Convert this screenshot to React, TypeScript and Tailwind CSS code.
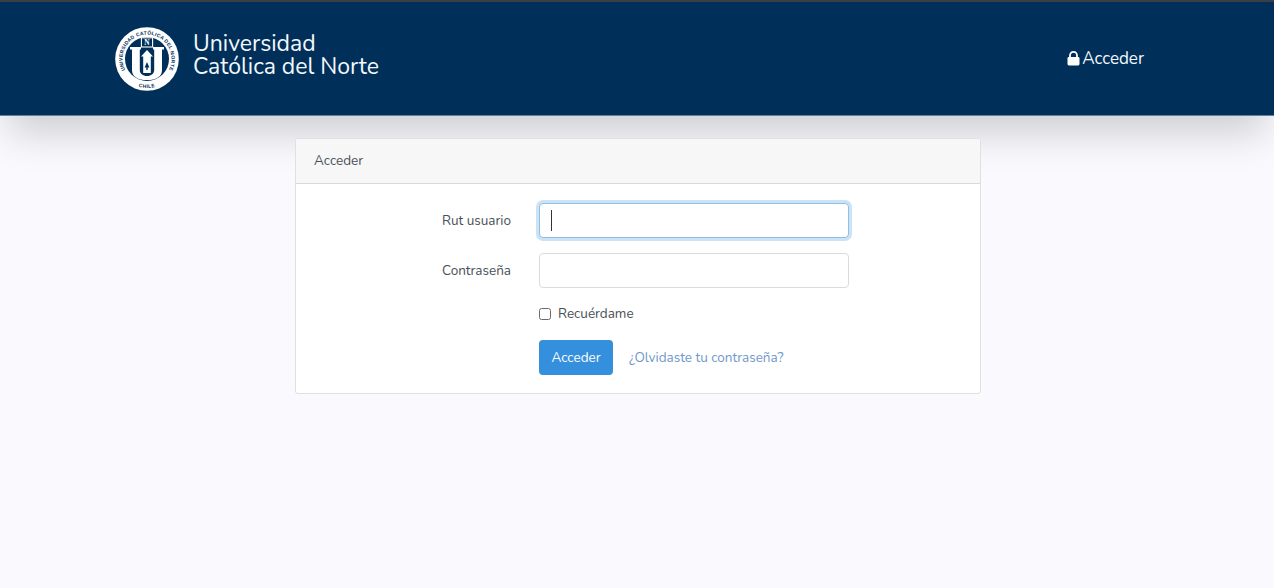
import React from "react";

function Logo() {
  return (
    <svg width="64" height="64" viewBox="0 0 64 64" className="shrink-0">
      <defs>
        <path id="arcTop" d="M 10.9 44.200 A 24.400 24.400 0 1 1 53.100 44.200" fill="none" />
        <path id="arcBottom" d="M 19.700 58.300 A 29 29 0 0 0 44.300 58.300" fill="none" />
      </defs>
      <circle cx="32" cy="32" r="31.800" fill="#ffffff" />
      <circle cx="32" cy="32" r="22" fill="#00305a" />
      <text fontFamily="Liberation Sans, sans-serif" fontSize="5" fontWeight="700" fill="#00305a" letterSpacing="0.25">
        <textPath href="#arcTop" startOffset="50%" textAnchor="middle">UNIVERSIDAD CATÓLICA DEL NORTE</textPath>
      </text>
      <text fontFamily="Liberation Sans, sans-serif" fontSize="5" fontWeight="700" fill="#00305a" letterSpacing="0.4">
        <textPath href="#arcBottom" startOffset="50%" textAnchor="middle">CHILE</textPath>
      </text>
      <path d="M15 20h11v2.600h-1.200v20.400c0 3.600 3 6 7.200 6s7.200-2.400 7.200-6V22.600H38V20h11v2.600h-2v20.600c0 6.500-6 9.800-15 9.800s-15-3.300-15-9.800V22.600h-2z" fill="#ffffff" />
      <rect x="26.400" y="10.800" width="11.200" height="9.200" fill="#00305a" stroke="#ffffff" strokeWidth="1.100" />
      <text x="32" y="18.200" textAnchor="middle" fontFamily="Liberation Serif, serif" fontSize="7.400" fontWeight="700" fill="#ffffff">N</text>
      <path d="M32 23l6 6.500h-2.200v16.500h-7.600V29.500H26z" fill="#ffffff" />
      <path d="M32 35l2.400 5.500h-1.700v2.500h-1.400v-2.500h-1.700z" fill="#00305a" />
    </svg>
  );
}

function Lock() {
  return (
    <svg width="13" height="15" viewBox="0 0 13 15" className="shrink-0">
      <path d="M3 6.500V4.400a3.500 3.500 0 0 1 7 0v2.100" fill="none" stroke="#ffffff" strokeWidth="1.800" />
      <rect x="0.500" y="6" width="12" height="8.500" rx="1.400" fill="#ffffff" />
    </svg>
  );
}

export default function App() {
  return (
    <div className="min-h-[588px] bg-[#f9f9fe] font-['Nunito','Lato','Noto_Sans',sans-serif] text-[13.5px] text-[#495057]">
      <header className="flex h-[115.5px] items-center justify-between border-t-2 border-b border-t-[#3a3f45] border-b-[#5d82a6] bg-[#00305a] pl-[115px] pr-[130px] shadow-[0_26px_38px_-8px_rgba(0,0,0,0.17)]">
        <div className="flex items-center gap-[14px] pt-[2px]">
          <Logo />
          <div className="pb-[9px] text-[23px] leading-[23px] text-[#f4f8fb]">
            <div>Universidad</div>
            <div>Católica del Norte</div>
          </div>
        </div>
        <div className="flex items-center gap-[2px] text-[17px] text-[#f4f8fb]">
          <Lock />
          <span>Acceder</span>
        </div>
      </header>

      <main className="flex justify-center pt-[22px] pl-[2px]">
        <section className="h-[256px] w-[686px] overflow-hidden rounded-[3px] border border-[#dfe0e2] bg-white">
          <div className="flex h-[45px] items-center border-b border-b-[#d9dadb] bg-[#f7f7f7] pl-[18px] pt-[2px]">Acceder</div>
          <div className="flex flex-col pt-[19px]">
            <div className="flex h-[35px] items-center">
              <label className="w-[215px] pt-[2px] text-right">Rut usuario</label>
              <div className="relative ml-[28px] h-[35px] w-[310px]">
                <input className="h-full w-full rounded-[4px] border border-[#8fbfe8] bg-white shadow-[0_0_0_3px_rgba(52,144,220,0.25)] outline-none" />
                <span className="absolute left-[12px] top-[7px] h-[21px] w-[1px] bg-[#333]" />
              </div>
            </div>
            <div className="mt-[15px] flex h-[35px] items-center">
              <label className="w-[215px] pt-[2px] text-right">Contraseña</label>
              <input className="ml-[28px] h-[35px] w-[310px] rounded-[4px] border border-[#d8dce0] bg-white outline-none" />
            </div>
            <div className="mt-[17px] flex h-[18px] items-center pl-[243px]">
              <span className="h-[12px] w-[12px] rounded-[2.5px] border border-[#6b6b6b] bg-white" />
              <span className="ml-[7px] pt-[2px]">Recuérdame</span>
            </div>
            <div className="mt-[17px] flex items-center pl-[243px]">
              <button className="h-[35px] w-[74px] rounded-[4px] bg-[#3490dc] pt-[2px] text-white">Acceder</button>
              <a className="ml-[16px] pt-[2px] text-[#6f98c9]">¿Olvidaste tu contraseña?</a>
            </div>
          </div>
        </section>
      </main>
    </div>
  );
}
